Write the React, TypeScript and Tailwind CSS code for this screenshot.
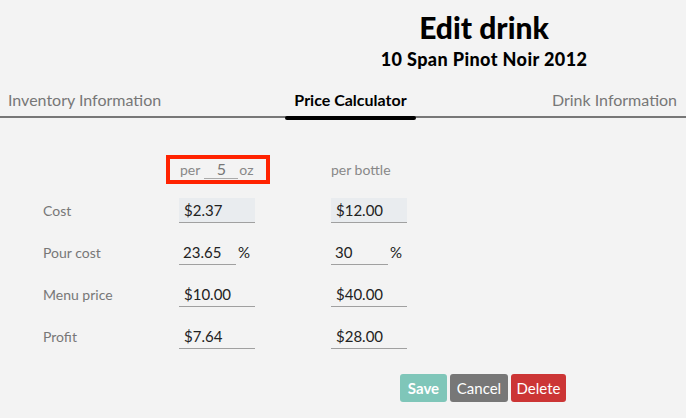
import React from "react";

const rows = [
  { label: "Cost", a: "$2.37", b: "$12.00", kind: "filled" },
  { label: "Pour cost", a: "23.65", b: "30", kind: "pct" },
  { label: "Menu price", a: "$10.00", b: "$40.00", kind: "plain" },
  { label: "Profit", a: "$7.64", b: "$28.00", kind: "plain" },
];

function Field({ value, kind }: { value: string; kind: string }) {
  if (kind === "filled") {
    return (
      <input
        readOnly
        value={value}
        className="w-[76px] h-[25px] bg-[#e9ecef] border-b border-[#a0a0a0] pl-[5px] text-[15px] text-[#222] outline-none"
      />
    );
  }
  if (kind === "pct") {
    return (
      <div className="flex items-center">
        <input
          readOnly
          value={value}
          className="w-[57px] h-[25px] border-b border-[#a0a0a0] pl-[4px] text-[15px] text-[#222] bg-transparent outline-none"
        />
        <span className="ml-[2px] text-[15px] text-[#222]">%</span>
      </div>
    );
  }
  return (
    <input
      readOnly
      value={value}
      className="w-[76px] h-[25px] border-b border-[#a0a0a0] pl-[5px] text-[15px] text-[#222] bg-transparent outline-none"
    />
  );
}

export default function App() {
  return (
    <div
      className="w-[686px] h-[418px] bg-[#f3f3f3] overflow-hidden"
      style={{ fontFamily: "Lato, 'Noto Sans', sans-serif" }}
    >
      <div className="ml-[282px] w-[404px] flex flex-col items-center pt-[9px]">
        <h1 className="text-[30px] leading-[36px] font-black text-black">Edit drink</h1>
        <h2 className="mt-[3px] text-[18px] leading-[22px] font-black text-black tracking-[0.4px]">10 Span Pinot Noir 2012</h2>
      </div>

      <div className="relative mt-[12px] flex items-end h-[36px] border-b-2 border-[#777] text-[16px]">
        <div className="w-[285px] pl-[8px] pb-[4px] text-[#777]">Inventory Information</div>
        <div className="relative w-[131px] pb-[4px] text-center font-bold text-black">
          Price Calculator
          <span className="absolute left-0 right-0 -bottom-[4px] h-[4px] bg-black rounded-[3px]" />
        </div>
        <div className="flex-1 pr-[9px] pb-[4px] text-right text-[#777]">Drink Information</div>
      </div>

      <div className="mt-[37px] flex flex-col gap-[17px]">
        <div className="flex items-center h-[29px] -mb-[3px]">
          <div className="w-[166px]" />
          <div className="w-[165px]">
            <div className="inline-flex items-center h-[29px] w-[104px] border-4 border-[#ff2200] pl-[10px] text-[14px] text-[#888]">
              <span>per</span>
              <input
                readOnly
                value="5"
                className="ml-[4px] w-[34px] h-[19px] border-b border-[#aaa] text-center text-[16px] text-[#777] bg-transparent outline-none"
              />
              <span className="ml-[1px]">oz</span>
            </div>
          </div>
          <div className="text-[14px] text-[#888]">per bottle</div>
        </div>

        {rows.map((r) => (
          <div key={r.label} className="flex items-center h-[25px]">
            <div className="w-[179px] pl-[43px] text-[14px] text-[#777]">{r.label}</div>
            <div className="w-[152px]">
              <Field value={r.a} kind={r.kind} />
            </div>
            <div>
              <Field value={r.b} kind={r.kind} />
            </div>
          </div>
        ))}
      </div>

      <div className="mt-[25px] flex gap-[3px] pl-[400px]">
        <button className="w-[47px] h-[28px] rounded-[3px] bg-[#7fc6b9] text-white font-bold text-[15px]">Save</button>
        <button className="w-[58px] h-[28px] rounded-[3px] bg-[#777777] text-white text-[15px]">Cancel</button>
        <button className="w-[55px] h-[28px] rounded-[3px] bg-[#cc3535] text-white text-[15px]">Delete</button>
      </div>
    </div>
  );
}
